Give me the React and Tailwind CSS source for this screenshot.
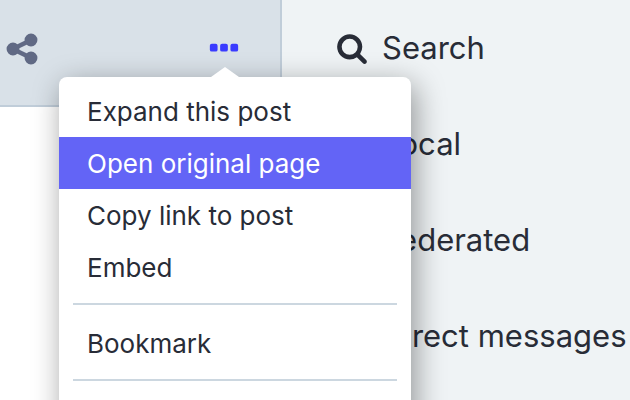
import { FaUsers, FaGlobe, FaEnvelope } from 'react-icons/fa';

const SearchIcon = () => (
  <svg viewBox="0 0 1792 1792" className="size-8 shrink-0 fill-current" aria-hidden="true">
    <path d="M1216 832q0-185-131.5-316.5t-316.5-131.5-316.5 131.5-131.5 316.5 131.5 316.5 316.5 131.5 316.5-131.5 131.5-316.5zm512 832q0 52-38 90t-90 38q-54 0-90-38l-343-342q-179 124-399 124-143 0-273.5-55.5t-225-150-150-225-55.5-273.5 55.5-273.5 150-225 225-150 273.5-55.5 273.5 55.5 225 150 150 225 55.5 273.5q0 220-124 399l343 343q37 37 37 90z" />
  </svg>
);

const ShareIcon = () => (
  <svg viewBox="0 0 1792 1792" className="size-9 fill-current" aria-hidden="true">
    <path d="M1344 1024q133 0 226.5 93.5t93.5 226.5-93.5 226.5-226.5 93.5-226.5-93.5-93.5-226.5q0-12 2-34l-360-180q-92 86-218 86-133 0-226.5-93.5t-93.5-226.5 93.5-226.5 226.5-93.5q126 0 218 86l360-180q-2-22-2-34 0-133 93.5-226.5t226.5-93.5 226.5 93.5 93.5 226.5-93.5 226.5-226.5 93.5q-126 0-218-86l-360 180q2 22 2 34t-2 34l360 180q92-86 218-86z" />
  </svg>
);

const MoreIcon = () => (
  <svg viewBox="0 0 1792 1792" className="size-9 fill-current" aria-hidden="true">
    <rect x="192" y="640" width="384" height="384" rx="96" />
    <rect x="704" y="640" width="384" height="384" rx="96" />
    <rect x="1216" y="640" width="384" height="384" rx="96" />
  </svg>
);

const NAV_LINKS = [
  { label: 'Search', icon: SearchIcon },
  { label: 'Local', icon: FaUsers },
  { label: 'Federated', icon: FaGlobe },
  { label: 'Direct messages', icon: FaEnvelope },
];

// null renders a separator
const MENU_ITEMS = [
  'Expand this post',
  'Open original page',
  'Copy link to post',
  'Embed',
  null,
  'Bookmark',
  null,
];

function DropdownMenu({ active }) {
  return (
    <div className="absolute left-[59px] top-[77px] z-10 w-[352px] rounded-lg bg-white pt-2 pb-16 shadow-[4px_8px_30px_rgba(0,0,0,0.4)]">
      <svg viewBox="0 0 28 10" className="absolute -top-[10px] left-[152px] h-[10px] w-7 fill-white" aria-hidden="true">
        <path d="M0 10 14 0l14 10z" />
      </svg>
      <ul>
        {MENU_ITEMS.map((item, i) => (
          item === null ? (
            <li key={i} className="mx-3.5 mt-2.5 mb-3 h-0.5 bg-[#ccd7e0]" role="separator" />
          ) : (
            <li key={i}>
              <button
                type="button"
                className={`block w-full px-7 pt-3 pb-2.5 text-left text-[26px] leading-[30px] whitespace-nowrap ${
                  item === active ? 'bg-[#6364f6] text-white' : 'text-[#282c37]'
                }`}
              >
                {item}
              </button>
            </li>
          )
        ))}
      </ul>
    </div>
  );
}

export default function App() {
  return (
    <div className="flex h-screen overflow-hidden bg-[#eff3f5] font-['Inter','Liberation_Sans',sans-serif] text-[#282c37]">
      <main className="relative w-[282px] shrink-0 bg-white">
        <div className="flex items-start justify-between border-r-2 border-b-2 border-[#c0cdd9] bg-[#d9e1e8] pt-[31px] pr-[38px] pb-[38px] pl-1">
          <button type="button" className="text-[#606984]" aria-label="Share">
            <ShareIcon />
          </button>
          <button type="button" className="text-[#3a3bff]" aria-label="More" aria-expanded="true">
            <MoreIcon />
          </button>
        </div>
        <DropdownMenu active="Open original page" />
      </main>

      <nav className="min-w-0 flex-1 pl-[54px]">
        {NAV_LINKS.map(({ label, icon: Icon }) => (
          <a key={label} href="#" className="flex h-24 items-center gap-3.5 text-[31px] leading-10 whitespace-nowrap">
            <Icon className="size-8 shrink-0" />
            {label}
          </a>
        ))}
      </nav>
    </div>
  );
}
